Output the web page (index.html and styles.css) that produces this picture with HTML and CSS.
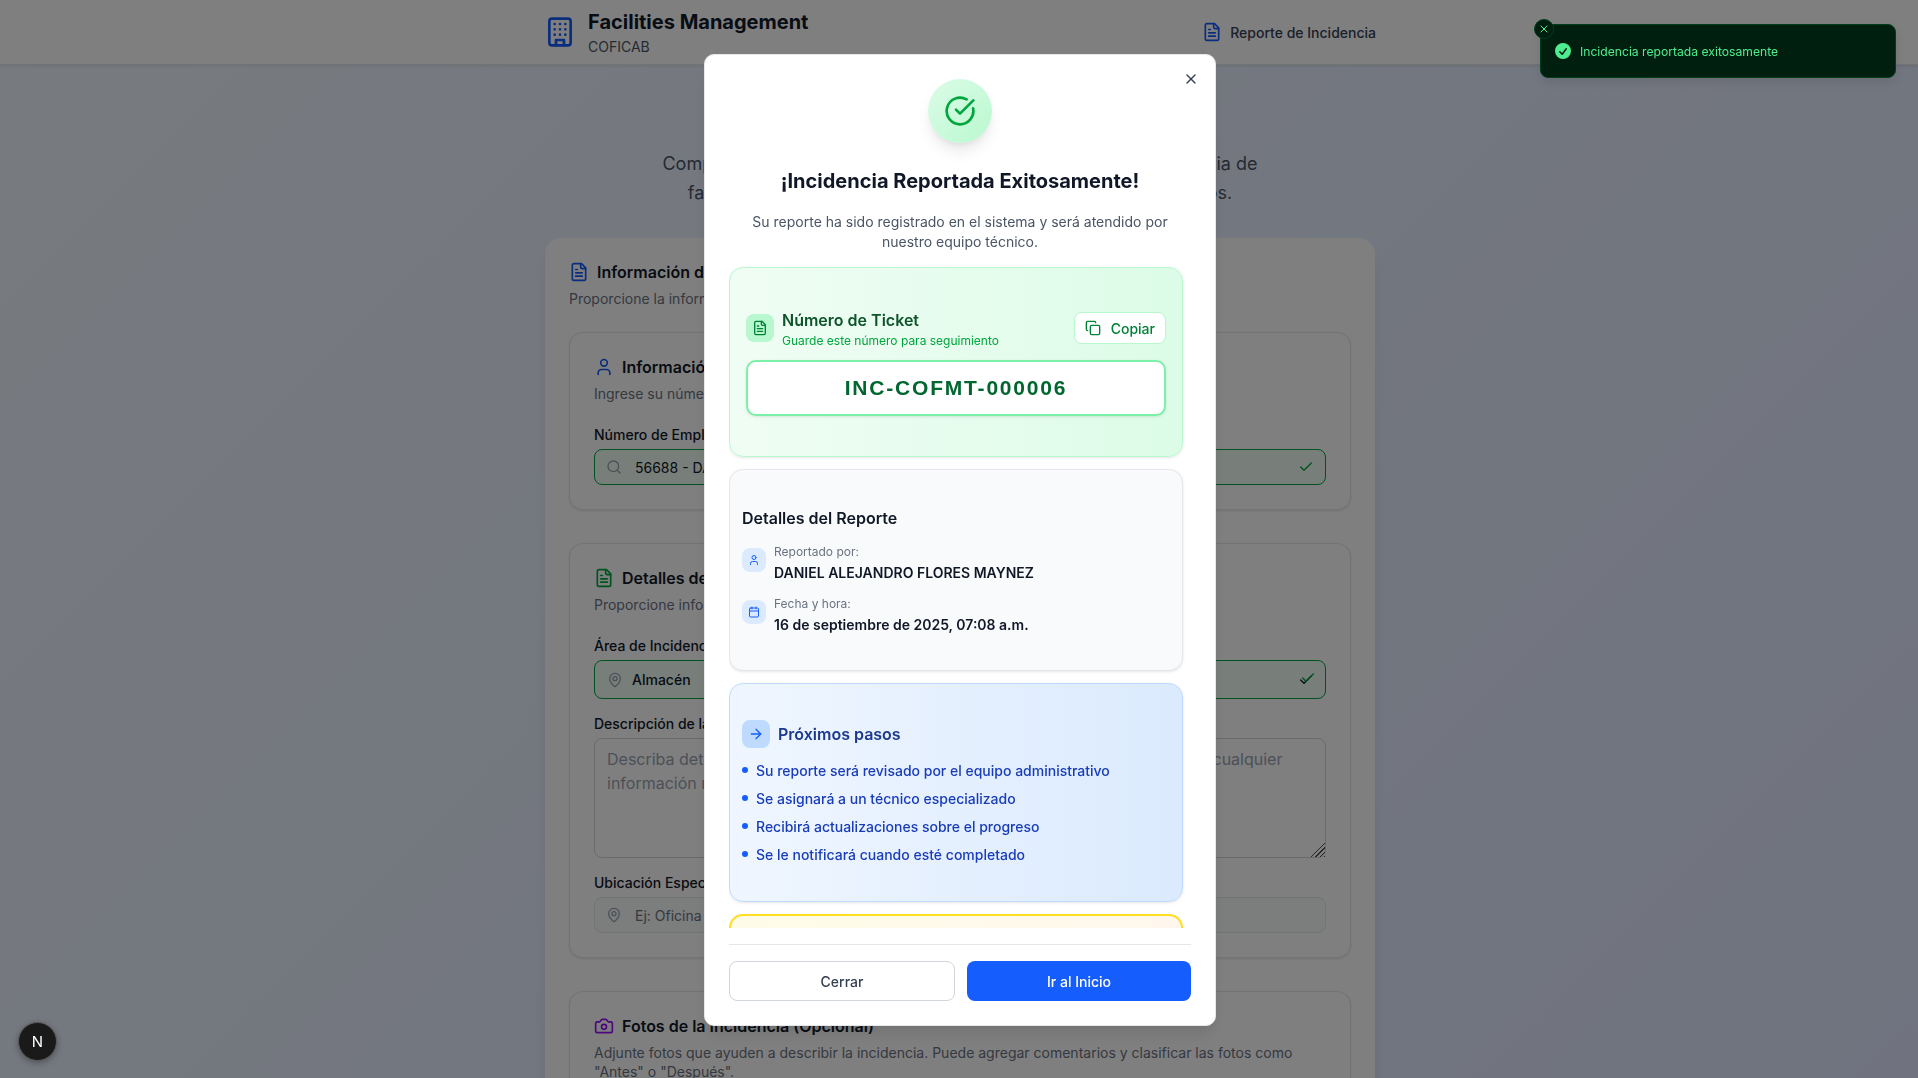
FILE: index.html
```html
<!DOCTYPE html>
<html lang="es">
<head>
    <meta charset="UTF-8">
    <meta name="viewport" content="width=device-width, initial-scale=1.0">
    <title>Facilities Management</title>
    <link rel="stylesheet" href="styles.css">
</head>
<body>
    <!-- icon sprite -->
    <svg class="sprite" xmlns="http://www.w3.org/2000/svg">
        <symbol id="i-building" viewBox="0 0 24 24"><rect x="4" y="2" width="16" height="20" rx="2"/><path d="M9 22v-4h6v4"/><path d="M8 6h.01M16 6h.01M12 6h.01M12 10h.01M12 14h.01M16 10h.01M16 14h.01M8 10h.01M8 14h.01"/></symbol>
        <symbol id="i-file" viewBox="0 0 24 24"><path d="M15 2H6a2 2 0 0 0-2 2v16a2 2 0 0 0 2 2h12a2 2 0 0 0 2-2V7Z"/><path d="M14 2v4a2 2 0 0 0 2 2h4"/><path d="M10 9H8M16 13H8M16 17H8"/></symbol>
        <symbol id="i-user" viewBox="0 0 24 24"><path d="M19 21v-2a4 4 0 0 0-4-4H9a4 4 0 0 0-4 4v2"/><circle cx="12" cy="7" r="4"/></symbol>
        <symbol id="i-calendar" viewBox="0 0 24 24"><path d="M8 2v4M16 2v4"/><rect x="3" y="4" width="18" height="18" rx="2"/><path d="M3 10h18"/></symbol>
        <symbol id="i-copy" viewBox="0 0 24 24"><rect x="8" y="8" width="14" height="14" rx="2"/><path d="M4 16c-1.1 0-2-.9-2-2V4c0-1.1.9-2 2-2h10c1.1 0 2 .9 2 2"/></symbol>
        <symbol id="i-arrow" viewBox="0 0 24 24"><path d="M5 12h14"/><path d="m12 5 7 7-7 7"/></symbol>
        <symbol id="i-x" viewBox="0 0 24 24"><path d="M18 6 6 18"/><path d="m6 6 12 12"/></symbol>
        <symbol id="i-search" viewBox="0 0 24 24"><path d="m21 21-4.34-4.34"/><circle cx="11" cy="11" r="8"/></symbol>
        <symbol id="i-pin" viewBox="0 0 24 24"><path d="M20 10c0 4.993-5.539 10.193-7.399 11.799a1 1 0 0 1-1.202 0C9.539 20.193 4 14.993 4 10a8 8 0 0 1 16 0"/><circle cx="12" cy="10" r="3"/></symbol>
        <symbol id="i-check" viewBox="0 0 24 24"><path d="M20 6 9 17l-5-5"/></symbol>
        <symbol id="i-check-circle" viewBox="0 0 24 24"><path d="M21.801 10A10 10 0 1 1 17 3.335"/><path d="m9 11 3 3L22 4"/></symbol>
        <symbol id="i-camera" viewBox="0 0 24 24"><path d="M14.5 4h-5L7 7H4a2 2 0 0 0-2 2v9a2 2 0 0 0 2 2h16a2 2 0 0 0 2-2V9a2 2 0 0 0-2-2h-3l-2.5-3z"/><circle cx="12" cy="13" r="3"/></symbol>
    </svg>

    <header class="site-header">
        <div class="wrap header-inner">
            <div class="brand">
                <svg class="icon icon-32 blue"><use href="#i-building"/></svg>
                <div>
                    <h1 class="brand-title">Facilities Management</h1>
                    <p class="brand-sub">COFICAB</p>
                </div>
            </div>
            <nav class="nav-link">
                <svg class="icon icon-20 blue"><use href="#i-file"/></svg>
                <span>Reporte de Incidencia</span>
            </nav>
        </div>
    </header>

    <main class="page">
        <div class="wrap">
            <div class="hero">
                <h2 class="hero-title">Reporte de Incidencia</h2>
                <p class="hero-text">Complete el siguiente formulario para reportar cualquier incidencia de<br>facilities. Nuestro equipo dará seguimiento a todos sus pedidos.</p>
            </div>

            <section class="form-card">
                <h3 class="card-head"><svg class="icon icon-20 blue"><use href="#i-file"/></svg>Información de la Incidencia</h3>
                <p class="card-sub">Proporcione la información necesaria para registrar su reporte</p>

                <div class="inner-card">
                    <h3 class="card-head"><svg class="icon icon-20 blue"><use href="#i-user"/></svg>Información del Empleado</h3>
                    <p class="card-sub">Ingrese su número de empleado para identificarse</p>
                    <label class="field-label">Número de Empleado</label>
                    <div class="field field-valid">
                        <svg class="icon icon-16 muted"><use href="#i-search"/></svg>
                        <span class="field-value">56688 - DANIEL ALEJANDRO FLORES MAYNEZ</span>
                        <svg class="icon icon-16 green"><use href="#i-check"/></svg>
                    </div>
                </div>

                <div class="inner-card">
                    <h3 class="card-head"><svg class="icon icon-20 green"><use href="#i-file"/></svg>Detalles de la Incidencia</h3>
                    <p class="card-sub">Proporcione información sobre la incidencia</p>
                    <label class="field-label">Área de Incidencia</label>
                    <div class="field field-valid field-select">
                        <svg class="icon icon-16 muted"><use href="#i-pin"/></svg>
                        <span class="field-value value-medium">Almacén</span>
                        <span class="double-check">
                            <svg class="icon icon-16 dark"><use href="#i-check"/></svg>
                            <svg class="icon icon-16 green check-over"><use href="#i-check"/></svg>
                        </span>
                    </div>
                    <label class="field-label">Descripción de la Incidencia</label>
                    <textarea class="field-area" placeholder="Describa detalladamente la incidencia, incluyendo qué ocurrió, cuándo surgió y cualquier información relevante..."></textarea>
                    <label class="field-label">Ubicación Específica</label>
                    <div class="field">
                        <svg class="icon icon-16 muted"><use href="#i-pin"/></svg>
                        <span class="field-value value-muted">Ej: Oficina 201, Planta 2</span>
                    </div>
                </div>

                <div class="inner-card">
                    <h3 class="card-head"><svg class="icon icon-20 purple"><use href="#i-camera"/></svg>Fotos de la Incidencia (Opcional)</h3>
                    <p class="card-sub">Adjunte fotos que ayuden a describir la incidencia. Puede agregar comentarios y clasificar las fotos como "Antes" o "Después".</p>
                </div>
            </section>
        </div>
    </main>

    <!-- success dialog -->
    <div class="overlay">
        <div class="modal">
            <svg class="icon icon-16 modal-close"><use href="#i-x"/></svg>
            <div class="modal-body">
                <div class="modal-top">
                    <div class="success-circle">
                        <svg class="icon icon-32 green"><use href="#i-check-circle"/></svg>
                    </div>
                    <h2 class="modal-title">¡Incidencia Reportada Exitosamente!</h2>
                    <p class="modal-text">Su reporte ha sido registrado en el sistema y será atendido por nuestro equipo técnico.</p>
                </div>

                <div class="box box-green">
                    <div class="ticket-row">
                        <div class="tile tile-green"><svg class="icon icon-16 green-dark"><use href="#i-file"/></svg></div>
                        <div class="ticket-info">
                            <div class="ticket-title">Número de Ticket</div>
                            <div class="ticket-sub">Guarde este número para seguimiento</div>
                        </div>
                        <button class="copy-btn"><svg class="icon icon-16"><use href="#i-copy"/></svg>Copiar</button>
                    </div>
                    <div class="ticket-number">INC-COFMT-000006</div>
                </div>

                <div class="box box-gray">
                    <h4 class="box-title">Detalles del Reporte</h4>
                    <div class="detail">
                        <div class="tile-small"><svg class="icon icon-12 blue"><use href="#i-user"/></svg></div>
                        <div>
                            <div class="detail-label">Reportado por:</div>
                            <div class="detail-value">DANIEL ALEJANDRO FLORES MAYNEZ</div>
                        </div>
                    </div>
                    <div class="detail">
                        <div class="tile-small"><svg class="icon icon-12 blue"><use href="#i-calendar"/></svg></div>
                        <div>
                            <div class="detail-label">Fecha y hora:</div>
                            <div class="detail-value">16 de septiembre de 2025, 07:08 a.m.</div>
                        </div>
                    </div>
                </div>

                <div class="box box-blue">
                    <div class="steps-head">
                        <div class="tile tile-blue"><svg class="icon icon-16 blue"><use href="#i-arrow"/></svg></div>
                        <h4 class="steps-title">Próximos pasos</h4>
                    </div>
                    <ul class="steps">
                        <li>Su reporte será revisado por el equipo administrativo</li>
                        <li>Se asignará a un técnico especializado</li>
                        <li>Recibirá actualizaciones sobre el progreso</li>
                        <li>Se le notificará cuando esté completado</li>
                    </ul>
                </div>

                <div class="box box-yellow"></div>
            </div>

            <div class="modal-footer">
                <button class="btn btn-outline">Cerrar</button>
                <button class="btn btn-primary">Ir al Inicio</button>
            </div>
        </div>
    </div>

    <!-- toast -->
    <div class="toast">
        <span class="toast-close"><svg class="icon icon-12"><use href="#i-x"/></svg></span>
        <svg class="toast-icon" viewBox="0 0 20 20" fill="currentColor"><path fill-rule="evenodd" clip-rule="evenodd" d="M10 18a8 8 0 100-16 8 8 0 000 16zm3.857-9.809a.75.75 0 00-1.214-.882l-3.483 4.79-1.88-1.88a.75.75 0 10-1.06 1.061l2.5 2.5a.75.75 0 001.137-.089l4-5.5z"/></svg>
        <span>Incidencia reportada exitosamente</span>
    </div>

    <div class="dev-badge">N</div>
</body>
</html>
```

FILE: styles.css
```css
* {
    box-sizing: border-box;
}

html, body {
    height: 100%;
}

body {
    margin: 0;
    overflow: hidden;
    font-family: Inter, "Noto Sans", sans-serif;
    color: #101828;
    background: linear-gradient(135deg, #eff6ff, #e0e7ff);
}

h1, h2, h3, h4, p, ul {
    margin: 0;
    padding: 0;
}

.sprite {
    display: none;
}

/* icons */
.icon {
    flex: none;
    fill: none;
    stroke: currentColor;
    stroke-width: 2;
    stroke-linecap: round;
    stroke-linejoin: round;
}
.icon-12 { width: 12px; height: 12px; }
.icon-16 { width: 16px; height: 16px; }
.icon-20 { width: 20px; height: 20px; }
.icon-32 { width: 32px; height: 32px; }
.blue { color: #155dfc; }
.green { color: #00a63e; }
.green-dark { color: #008236; }
.purple { color: #9810fa; }
.muted { color: #99a1af; }
.dark { color: #101828; }

/* page behind the dialog */
.wrap {
    width: 830px;
    margin: 0 auto;
}

.site-header {
    height: 65px;
    padding-left: 2px;
    background: #fff;
    border-bottom: 1px solid #e5e7eb;
    box-shadow: 0 1px 3px rgba(0, 0, 0, 0.1);
}

.header-inner {
    display: flex;
    justify-content: space-between;
    align-items: center;
    height: 64px;
}

.brand {
    display: flex;
    align-items: center;
    gap: 12px;
    margin-left: -1px;
}

.brand-title {
    font-size: 20px;
    line-height: 28px;
    font-weight: 700;
}

.brand-sub {
    margin-top: 1px;
    font-size: 14px;
    line-height: 20px;
    color: #4a5565;
}

.nav-link {
    display: flex;
    align-items: center;
    gap: 8px;
    margin-right: -1px;
    font-size: 14px;
    font-weight: 500;
    color: #364153;
}

.page {
    padding-left: 2px;
}

.hero {
    height: 173px;
    padding-top: 32px;
    text-align: center;
}

.hero-title {
    font-size: 30px;
    line-height: 36px;
    font-weight: 700;
    margin-bottom: 16px;
}

.hero-text {
    font-size: 18px;
    line-height: 29px;
    color: #4a5565;
    white-space: nowrap;
}

.form-card {
    background: #fff;
    border-radius: 16px;
    padding: 22px 24px 24px;
    box-shadow: 0 10px 15px -3px rgba(0, 0, 0, 0.1);
}

.card-head {
    display: flex;
    align-items: center;
    gap: 8px;
    font-size: 16px;
    line-height: 24px;
    font-weight: 600;
}

.card-sub {
    margin-top: 5px;
    font-size: 14px;
    line-height: 19px;
    color: #6a7282;
}

.inner-card {
    margin-top: 33px;
    padding: 22px 24px 24px;
    background: #fff;
    border: 1px solid #e5e7eb;
    border-radius: 14px;
    box-shadow: 0 1px 3px rgba(0, 0, 0, 0.1);
}

.form-card > .card-sub + .inner-card {
    margin-top: 24px;
}

.field-label {
    display: block;
    margin: 22px 0 4px;
    font-size: 14px;
    line-height: 20px;
    font-weight: 500;
}

.field + .field-label,
.field-area + .field-label {
    margin-top: 15px;
}

.field {
    display: flex;
    align-items: center;
    gap: 13px;
    height: 36px;
    padding: 0 11px;
    background: #f9fafb;
    border: 1px solid #e5e7eb;
    border-radius: 8px;
    font-size: 14px;
}

.field-valid {
    background: #f0fdf4;
    border-color: #00a63e;
}

.field-select {
    height: 39px;
    padding: 0 12px;
    gap: 9px;
}

.field-value {
    flex: 1;
}

.value-medium {
    font-weight: 500;
}

.value-muted {
    color: #6a7282;
}

.double-check {
    position: relative;
    display: flex;
    margin-right: -1px;
}

.check-over {
    position: absolute;
    left: 2px;
    top: -2px;
}

.field-area {
    display: block;
    width: 100%;
    height: 120px;
    padding: 8px 12px;
    border: 1px solid #d1d5dc;
    border-radius: 8px;
    background: #fff;
    font: 16px/24px Inter, "Noto Sans", sans-serif;
}

.field-area::placeholder {
    color: #99a1af;
}

.field-area::-webkit-resizer {
    background:
        linear-gradient(135deg, #fff 50%, transparent 50%),
        repeating-linear-gradient(135deg, transparent 0 2px, #555 2px 3px);
}

/* dialog */
.overlay {
    position: fixed;
    inset: 0;
    display: flex;
    align-items: flex-start;
    justify-content: center;
    padding: 54px 0 0 2px;
    background: rgba(0, 0, 0, 0.5);
}

.modal {
    position: relative;
    display: flex;
    flex-direction: column;
    width: 512px;
    height: 972px;
    padding: 24px;
    background: #fff;
    border: 1px solid #e5e7eb;
    border-radius: 10px;
    box-shadow: 0 10px 15px -3px rgba(0, 0, 0, 0.1);
}

.modal-close {
    position: absolute;
    top: 16px;
    right: 16px;
    color: #364153;
}

.modal-body {
    flex: 1;
    min-height: 0;
    overflow: hidden;
    padding-right: 8px;
}

.modal-top {
    margin-right: -8px;
    text-align: center;
}

.success-circle {
    display: flex;
    align-items: center;
    justify-content: center;
    width: 64px;
    height: 64px;
    margin: 0 auto 24px;
    border-radius: 50%;
    background: linear-gradient(135deg, #dcfce7, #b9f8cf);
    box-shadow: 0 10px 15px -3px rgba(0, 0, 0, 0.1), 0 4px 6px -4px rgba(0, 0, 0, 0.1);
}

.modal-title {
    font-size: 20px;
    line-height: 28px;
    font-weight: 700;
}

.modal-text {
    margin-top: 17px;
    padding: 0 16px;
    font-size: 14px;
    line-height: 20px;
    color: #4a5565;
}

.box {
    margin-top: 12px;
    border: 1px solid #e5e7eb;
    border-radius: 14px;
    box-shadow: 0 1px 3px rgba(0, 0, 0, 0.1);
}

.box-green {
    margin-top: 15px;
    padding: 40px 16px;
    border-color: #b9f8cf;
    background: linear-gradient(90deg, #f0fdf4, #dcfce7);
}

.ticket-row {
    display: flex;
    align-items: center;
    gap: 8px;
}

.tile {
    display: flex;
    align-items: center;
    justify-content: center;
    flex: none;
    width: 28px;
    height: 28px;
    border-radius: 8px;
}

.tile-green {
    background: #b9f8cf;
}

.tile-blue {
    background: #bedbff;
}

.ticket-info {
    flex: 1;
}

.ticket-title {
    font-size: 16px;
    line-height: 24px;
    font-weight: 600;
    color: #0d542b;
}

.ticket-sub {
    margin: 1px 0 -1px;
    font-size: 12px;
    line-height: 16px;
    color: #00a63e;
}

.copy-btn {
    display: flex;
    align-items: center;
    gap: 10px;
    height: 32px;
    padding: 0 10px;
    background: #fff;
    border: 1px solid #b9f8cf;
    border-radius: 8px;
    font: 500 14px Inter, sans-serif;
    color: #008236;
}

.ticket-number {
    margin-top: 12px;
    height: 56px;
    background: #fff;
    border: 2px solid #7bf1a8;
    border-radius: 10px;
    box-shadow: 0 1px 3px rgba(0, 0, 0, 0.1);
    font: 700 21px/52px "Liberation Sans", sans-serif;
    letter-spacing: 1.8px;
    text-align: center;
    color: #016630;
}

.box-gray {
    padding: 36px 12px 35px;
    background: #f9fafb;
}

.box-title {
    font-size: 16px;
    line-height: 24px;
    font-weight: 600;
    margin-bottom: 13px;
}

.detail {
    display: flex;
    gap: 8px;
    margin-top: 12px;
}

.tile-small {
    display: flex;
    align-items: center;
    justify-content: center;
    flex: none;
    width: 24px;
    height: 24px;
    margin-top: 5px;
    border-radius: 8px;
    background: #dbeafe;
}

.detail-label {
    padding-top: 1px;
    font-size: 12px;
    line-height: 16px;
    color: #6a7282;
}

.detail-value {
    margin-top: 3px;
    font-size: 14px;
    line-height: 20px;
    font-weight: 600;
}

.box-blue {
    padding: 36px 12px;
    border-color: #bedbff;
    background: linear-gradient(90deg, #eff6ff, #dbeafe);
}

.steps-head {
    display: flex;
    align-items: center;
    gap: 8px;
}

.steps-title {
    font-size: 16px;
    line-height: 24px;
    font-weight: 600;
    color: #1c398e;
}

.steps {
    margin-top: 13px;
    list-style: none;
}

.steps li {
    display: flex;
    gap: 8px;
    font-size: 14px;
    line-height: 20px;
    font-weight: 500;
    color: #193cb8;
}

.steps li + li {
    margin-top: 8px;
}

.steps li::before {
    content: "";
    flex: none;
    width: 6px;
    height: 6px;
    margin-top: 6px;
    border-radius: 50%;
    background: #155dfc;
}

.box-yellow {
    height: 60px;
    border: 2px solid #ffdf20;
    background: linear-gradient(90deg, #fefce8, #fff7ed);
}

.modal-footer {
    display: grid;
    grid-template-columns: 226fr 224fr;
    gap: 12px;
    margin-top: 16px;
    padding-top: 16px;
    border-top: 1px solid #e5e7eb;
}

.btn {
    height: 40px;
    border-radius: 8px;
    font: 500 14px Inter, sans-serif;
}

.btn-outline {
    background: #fff;
    border: 1px solid #d1d5dc;
    color: #364153;
}

.btn-primary {
    background: #155dfc;
    border: 0;
    color: #fff;
}

/* toast, top right */
.toast {
    position: fixed;
    top: 24px;
    right: 22px;
    display: flex;
    align-items: center;
    gap: 7px;
    width: 356px;
    height: 54px;
    padding: 0 12px;
    background: #001f0f;
    border: 1px solid #003d1c;
    border-radius: 8px;
    box-shadow: 0 4px 12px rgba(0, 0, 0, 0.1);
    font-size: 12.15px;
    color: #4eee90;
}

.toast-icon {
    flex: none;
    width: 20px;
    height: 20px;
}

.toast-close {
    position: absolute;
    top: -6px;
    left: -7px;
    display: flex;
    align-items: center;
    justify-content: center;
    width: 20px;
    height: 20px;
    background: #001f0f;
    border: 1px solid #003d1c;
    border-radius: 50%;
}

/* next dev indicator */
.dev-badge {
    position: fixed;
    left: 18px;
    bottom: 17px;
    display: flex;
    align-items: center;
    justify-content: center;
    width: 39px;
    height: 39px;
    background: #1a1a1a;
    border: 1px solid #5a5a5a;
    border-radius: 50%;
    box-shadow: 0 2px 6px rgba(0, 0, 0, 0.3);
    font-size: 15px;
    font-weight: 400;
    color: #fff;
}
```
